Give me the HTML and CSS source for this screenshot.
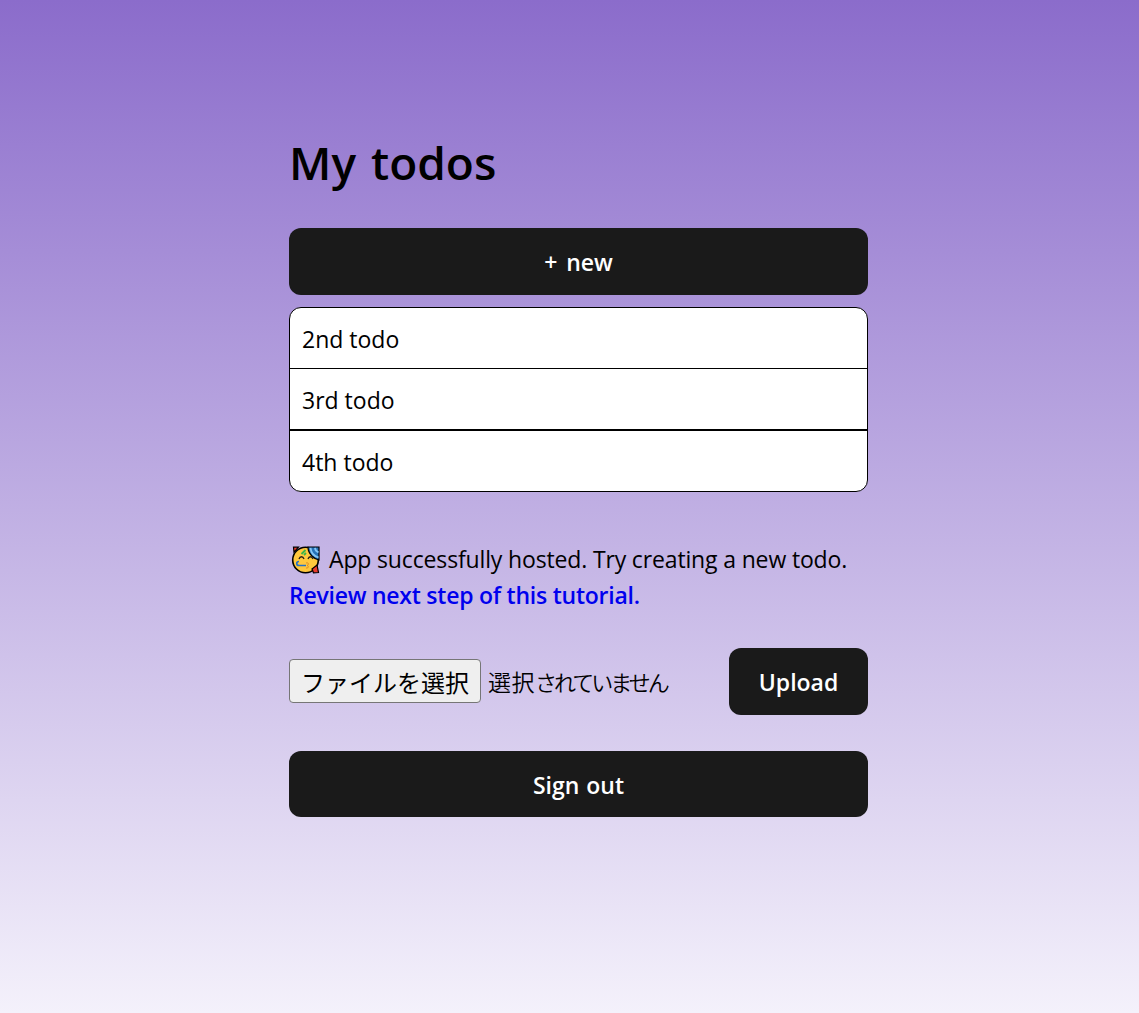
FILE: index.html
```html
<!DOCTYPE html>
<html lang="ja">
<head>
    <meta charset="UTF-8">
    <meta name="viewport" content="width=device-width, initial-scale=1.0">
    <title>My todos</title>
    <link rel="stylesheet" href="styles.css">
</head>
<body>
    <main>
        <h1>My todos</h1>
        <button class="new-button" type="button">+ new</button>
        <ul class="todo-list">
            <li>2nd todo</li>
            <li>3rd todo</li>
            <li>4th todo</li>
        </ul>
        <div class="hosted">
            <div class="hosted-line">
                <svg class="party" viewBox="0 0 30 30" aria-label="🥳">
                    <circle cx="14.5" cy="15" r="12.8" fill="#ffc83d" stroke="#000" stroke-width="1.6"/>
                    <path d="M2.500 2.200h5l-4.500 5z" fill="#e8392b" stroke="#000" stroke-width="1.200"/>
                    <path d="M21 24l5-4 1.500 7.500-5 .3z" fill="#e8392b" stroke="#000" stroke-width="1.200"/>
                    <path d="M17 2h11v13C23 14 17 9 17 2z" fill="#2672b8" stroke="#000" stroke-width="1.2"/>
                    <path d="M19.5 2.800c.5 5 4 8.500 8 9.500M24 2.800c.2 2.200 1.500 3.700 3.500 4.500" fill="none" stroke="#83c5f4" stroke-width="1.800"/>
                    <path d="M8 14c1-3 4-3 5 0M17 14c1-3 4-3 5 0" fill="none" stroke="#2b2118" stroke-width="1.3"/>
                    <path d="M10.500 9l4-4M13 10l2-2" fill="none" stroke="#39b54a" stroke-width="1.800"/>
                    <path d="M15 20.500H8c-3 0-3-4 0-4" fill="none" stroke="#2672c8" stroke-width="1.700"/>
                    <path d="M15 18c3-1 3 2 1 2.500 2 0 2 3-1 2.500" fill="none" stroke="#d98b2b" stroke-width="1"/>
                </svg>
                <span class="hosted-text">App successfully hosted. Try creating a new todo.</span>
            </div>
            <a href="#">Review next step of this tutorial.</a>
        </div>
        <div class="upload-row">
            <div class="file-picker">
                <button class="file-button" type="button">ファイルを選択</button>
                <span class="file-status">選択<span class="kana">されていません</span></span>
            </div>
            <button class="upload-button" type="button">Upload</button>
        </div>
        <button class="signout-button" type="button">Sign out</button>
    </main>
</body>
</html>
```
FILE: styles.css
```css
* {
    box-sizing: border-box;
}

body {
    margin: 0;
    height: 1013px;
    overflow: hidden;
    background: linear-gradient(180deg, #8b6ccb, #f4f1fb);
    font-family: "Open Sans", "Noto Sans CJK JP", sans-serif;
    font-size: 23px;
    line-height: 36px;
    color: #000;
}

main {
    display: flex;
    flex-direction: column;
    width: 579px;
    margin-left: 289px;
    padding-top: 126px;
}

h1 {
    margin: 0 0 30px;
    font-size: 46px;
    font-weight: 600;
    line-height: 72px;
    word-spacing: 3px;
    white-space: nowrap;
}

button {
    height: 67px;
    padding: 1px 0 0;
    border: none;
    border-radius: 12px;
    background-color: #1a1a1a;
    color: #fff;
    font-family: inherit;
    font-size: 23px;
    font-weight: 600;
    cursor: pointer;
}

.new-button {
    word-spacing: 3px;
}

.signout-button {
    height: 66px;
    word-spacing: 1px;
}

.todo-list {
    display: flex;
    flex-direction: column;
    height: 185px;
    margin: 12px 0 0;
    padding: 0;
    list-style: none;
    border: 1px solid #000;
    border-radius: 12px;
    background-color: #fff;
}

.todo-list li {
    height: 61px;
    padding: 13px 12px 0;
}

.todo-list li:first-child {
    height: 60px;
}

.todo-list li + li {
    border-top: 1px solid #000;
}

.todo-list li:last-child {
    border-top-width: 2px;
}

.hosted {
    margin-top: 49px;
    white-space: nowrap;
}

.hosted-line {
    display: flex;
    align-items: center;
    height: 36px;
}

.party {
    width: 30px;
    height: 30px;
    margin: 1px 8px 0 2px;
}

.hosted-text {
    letter-spacing: -0.15px;
}

.hosted a {
    color: #0000ee;
    font-weight: 600;
    letter-spacing: -0.24px;
    text-decoration: none;
}

.upload-row {
    display: flex;
    justify-content: space-between;
    margin: 35px 0 36px;
}

.file-picker {
    display: flex;
    align-items: center;
    gap: 7px;
    padding-bottom: 1px;
}

.file-button {
    width: 192px;
    height: 44px;
    padding: 0;
    border: 1px solid #767676;
    border-radius: 4px;
    background-color: #efefef;
    color: #000;
    font-family: "Noto Sans CJK JP", sans-serif;
    font-size: 24px;
    font-weight: 400;
}

.file-status {
    font-family: "Noto Sans CJK JP", sans-serif;
    font-size: 23px;
    font-weight: 350;
    letter-spacing: 0.5px;
}

.kana {
    font-size: 22px;
    letter-spacing: -3px;
}

.upload-button {
    width: 139px;
}
```
